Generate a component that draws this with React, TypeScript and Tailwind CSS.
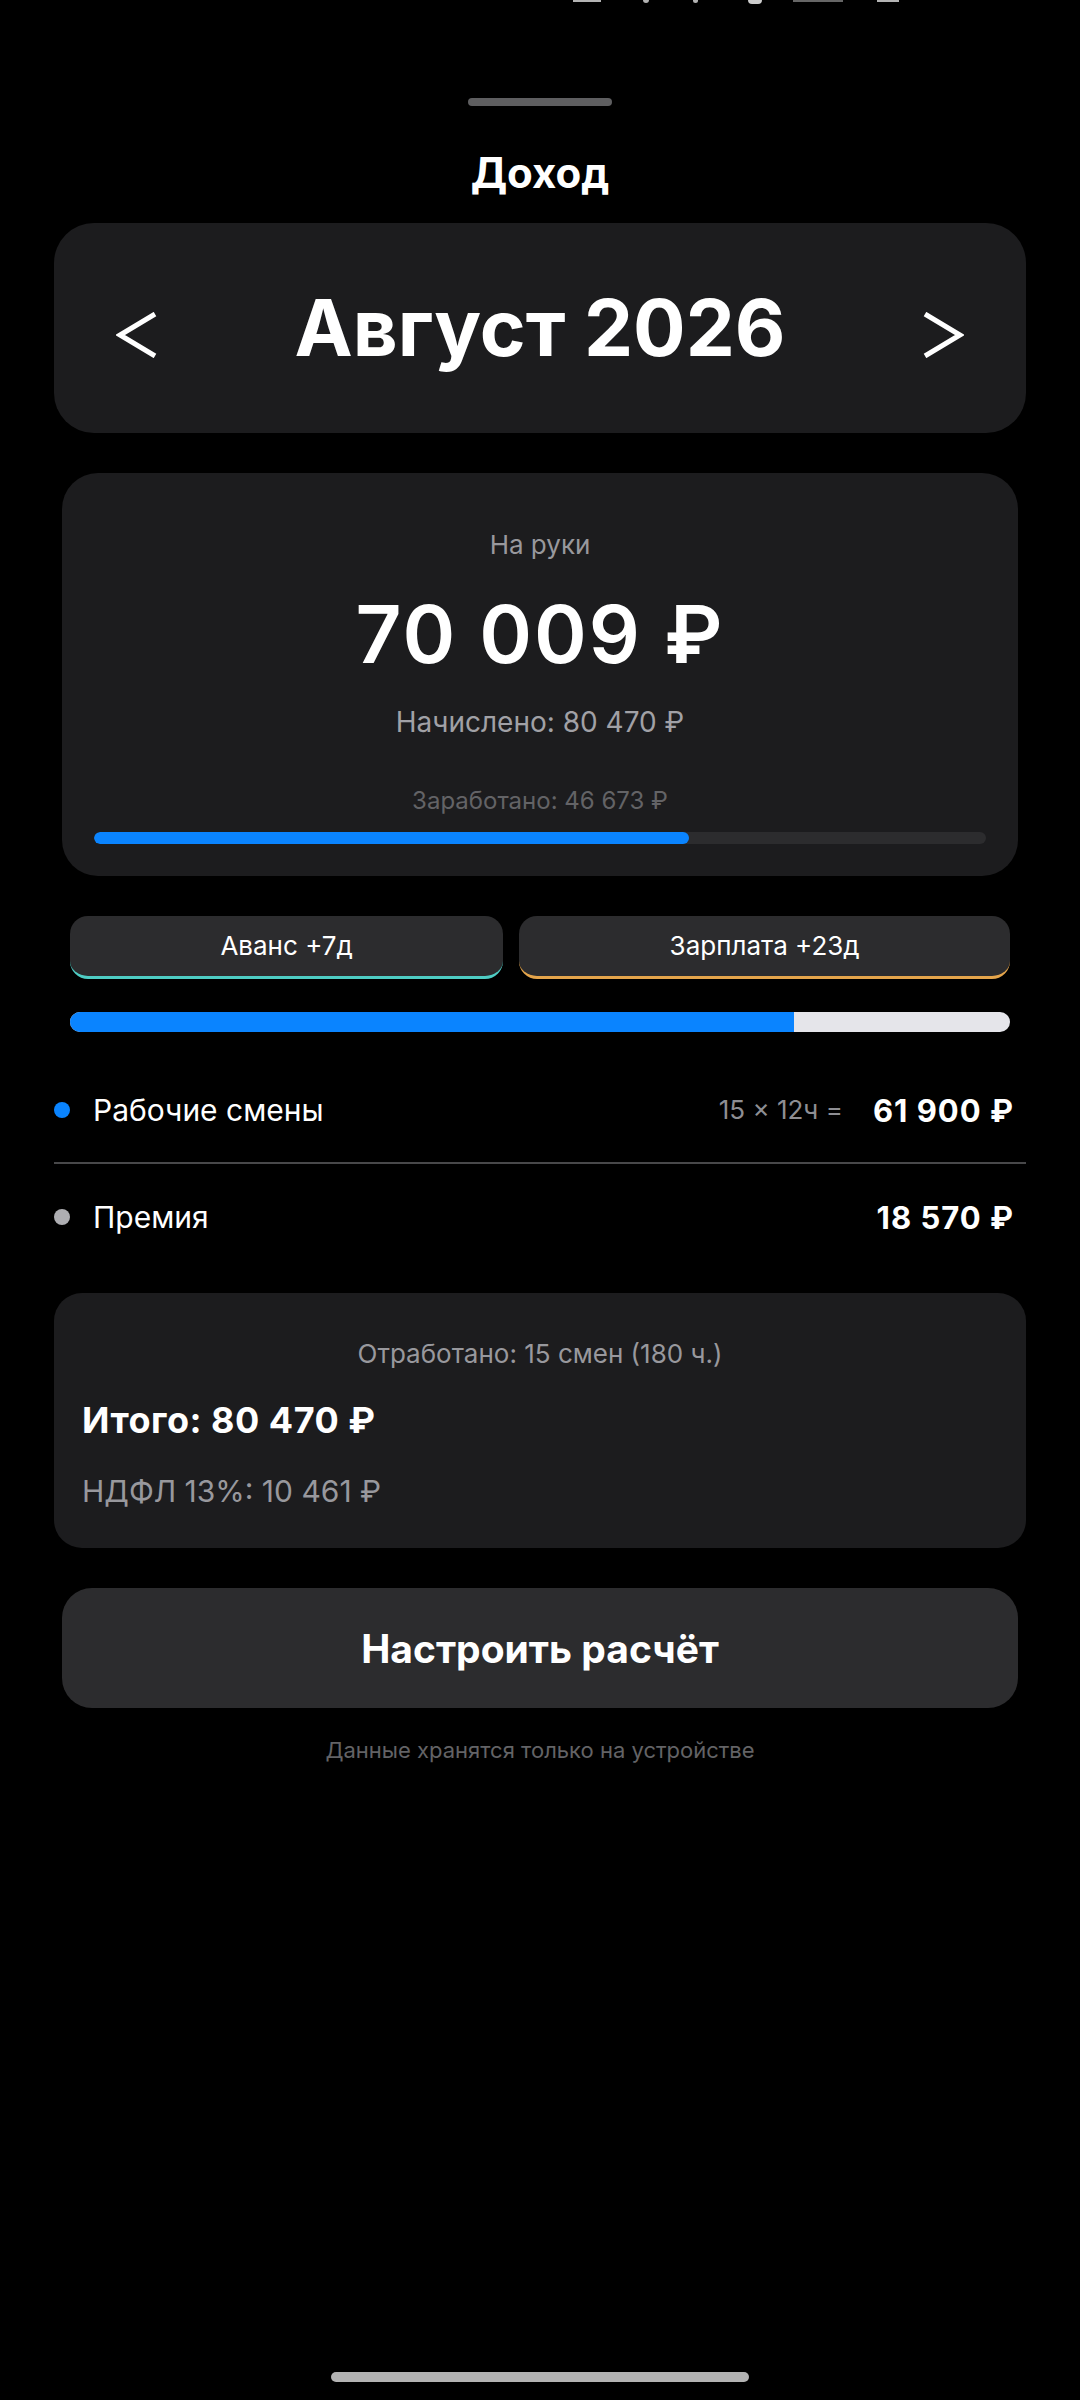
import type { ReactNode } from "react";

function Chevron({ dir }: { dir: "left" | "right" }) {
  const pts = dir === "left" ? "39,2 4,23 39,44" : "3,2 38,23 3,44";
  return (
    <svg width="42" height="46" viewBox="0 0 42 46" fill="none" className="shrink-0 mt-[14px]">
      <polyline points={pts} stroke="white" strokeWidth="5" strokeLinejoin="miter" />
    </svg>
  );
}

function PayChip({ children, accent }: { children: ReactNode; accent: string }) {
  return (
    <div className={`flex-auto h-[63px] px-6 flex items-center justify-center rounded-[18px] bg-[#2c2c2e] border-b-[3px] ${accent} text-[26px] leading-none text-white`}>
      {children}
    </div>
  );
}

function Row({ dot, label, hint, value, h }: { dot: string; label: string; hint?: string; value: string; h: string }) {
  return (
    <div className={`flex items-center ${h} pr-3`}>
      <div className={`w-4 h-4 rounded-full ${dot}`} />
      <div className="ml-[23px] text-[30px] leading-none">{label}</div>
      <div className="ml-auto flex items-center">
        {hint && <span className="text-[26px] leading-none text-[#8e8e93] mr-[30px]">{hint}</span>}
        <span className="text-[31px] leading-none font-bold tracking-[1px]">{value}</span>
      </div>
    </div>
  );
}

export default function App() {
  return (
    <div className="min-h-[2400px] w-[1080px] bg-black text-white font-[Inter,'Noto_Sans',sans-serif] flex flex-col">
      {/* status bar bottoms peeking in */}
      <div className="h-[4px] flex items-start">
        <div className="ml-[573px] w-[28px] h-[2px] bg-white/70" />
        <div className="ml-[42px] w-[6px] h-[3px] rounded-b-full bg-white/70" />
        <div className="ml-[44px] w-[5px] h-[3px] rounded-b-full bg-white/70" />
        <div className="ml-[50px] w-[14px] h-[4px] rounded-b-full bg-white/80" />
        <div className="ml-[31px] w-[50px] h-[2px] bg-white/40" />
        <div className="ml-[34px] w-[22px] h-[2px] bg-white/70" />
      </div>

      <div className="px-[54px] flex flex-col">
        <div className="mx-auto mt-[94px] h-2 w-[144px] rounded-full bg-[#5e5e60]" />
        <h1 className="mt-[46px] text-center text-[42px] font-bold leading-none">Доход</h1>

        <div className="mt-[29px] h-[210px] rounded-[40px] bg-[#1c1c1e] flex items-center justify-between px-[62px]">
          <Chevron dir="left" />
          <div className="text-[78px] font-bold leading-none">Август 2026</div>
          <Chevron dir="right" />
        </div>

        <div className="mx-2 mt-[40px] rounded-[36px] bg-[#1c1c1e] px-8 pt-[59px] pb-8 flex flex-col items-center">
          <div className="text-[26px] leading-none text-[#98989d]">На руки</div>
          <div className="mt-[36px] text-[80px] font-semibold leading-none tracking-[2px]">70 009 ₽</div>
          <div className="mt-[34px] text-[28px] leading-none text-[#a1a1a6]">Начислено: 80 470 ₽</div>
          <div className="mt-[53px] text-[24px] leading-none text-[#636366]">Заработано: 46 673 ₽</div>
          <div className="mt-[19px] w-full h-3 rounded-full bg-[#2c2c2e] overflow-hidden">
            <div className="h-full rounded-full bg-[#0a84ff]" style={{ width: `${(46673 / 70009) * 100}%` }} />
          </div>
        </div>

        <div className="mx-4 mt-[40px] flex gap-4">
          <PayChip accent="border-[#4ecdc4]">Аванс +7д</PayChip>
          <PayChip accent="border-[#e5a54b]">Зарплата +23д</PayChip>
        </div>

        <div className="mx-4 mt-[33px] h-5 rounded-full bg-[#e5e5ea] overflow-hidden">
          <div className="h-full bg-[#0a84ff]" style={{ width: "77%" }} />
        </div>

        <div className="mt-[26px]">
          <Row h="h-[104px]" dot="bg-[#0a84ff]" label="Рабочие смены" hint="15 × 12ч =" value="61 900 ₽" />
          <div className="h-[2px] bg-[#48484a]" />
          <Row h="h-[106px]" dot="bg-[#aeaeb2]" label="Премия" value="18 570 ₽" />
        </div>

        <div className="mt-[23px] rounded-[28px] bg-[#1c1c1e] px-7 pt-[48px] pb-[42px]">
          <div className="text-center text-[26px] leading-none text-[#98989d]">Отработано: 15 смен (180 ч.)</div>
          <div className="mt-[35px] text-[36px] font-bold leading-none tracking-[0.5px]">Итого: 80 470 ₽</div>
          <div className="mt-[38px] text-[30px] leading-none text-[#98989d]">НДФЛ 13%: 10 461 ₽</div>
        </div>

        <button className="mx-2 mt-[40px] h-[120px] rounded-[30px] bg-[#2c2c2e] text-[39px] font-bold leading-none text-white">
          Настроить расчёт
        </button>

        <div className="mt-[31px] text-center text-[22px] leading-none text-[#636366]">Данные хранятся только на устройстве</div>
      </div>

      <div className="mt-auto mb-[18px] mx-auto w-[418px] h-[10px] rounded-full bg-[#b3b3b3]" />
    </div>
  );
}
